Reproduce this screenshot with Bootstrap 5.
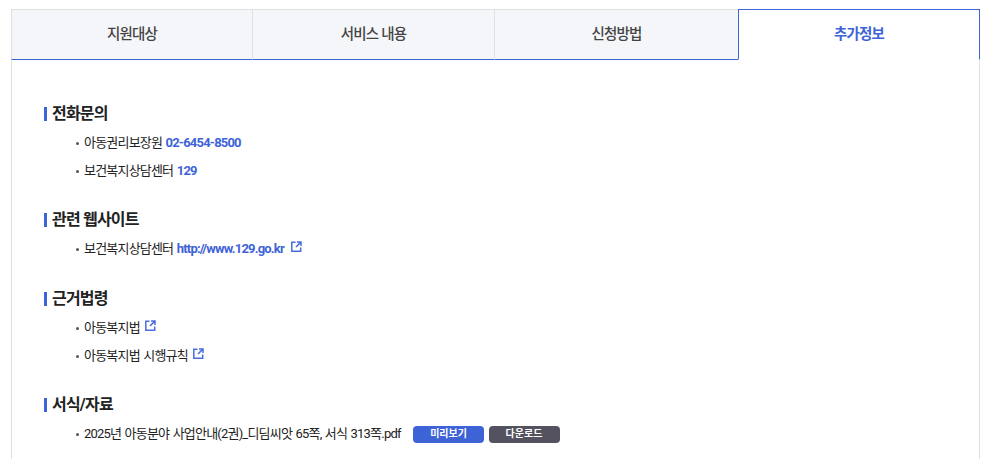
<!DOCTYPE html>
<html lang="ko">
<head>
  <meta charset="UTF-8">
  <title>추가정보</title>
  <link href="https://cdn.jsdelivr.net/npm/bootstrap@5.3.0/dist/css/bootstrap.min.css" rel="stylesheet">
  <style>
    html, body { height: 459px; overflow: hidden; }
    body { font-family: "Roboto", "Noto Sans CJK KR", sans-serif; color: #222; background: #fff; letter-spacing: -0.05em; }
    .detail-wrap { margin: 9px 9px 0 11px; }
    .detail-tabs { height: 51px; flex-wrap: nowrap; }
    .detail-tabs .nav-item:nth-child(1) { width: 242px; }
    .detail-tabs .nav-item:nth-child(2) { width: 242px; }
    .detail-tabs .nav-item:nth-child(3) { width: 244px; }
    .detail-tabs .nav-item:nth-child(4) { width: 241px; }
    .detail-tabs .nav-link {
      display: flex; align-items: center; justify-content: center; height: 51px; padding: 1px 0 0;
      background: #f5f6fa; color: #444; font-size: 14.5px; font-weight: 500; border-radius: 0;
      border: 1px solid #e0e0e0; border-left-width: 0; border-bottom: 1px solid #3e63d6;
    }
    .detail-tabs .nav-item:first-child .nav-link { border-left-width: 1px; }
    .detail-tabs .nav-link.active {
      background: #fff; color: #3e63d6; font-weight: 700;
      border: 1px solid #3e63d6; border-bottom-color: #fff; margin-left: -1px;
    }
    .detail-body { border: 1px solid #e0e0e0; border-top: 0; border-bottom: 0; padding: 42px 32px 0; height: 420px; }
    .info-title { display: flex; align-items: center; font-size: 16px; font-weight: 700; line-height: 24px; margin: 0 0 3px; color: #222; }
    .info-title::before { content: ""; flex: none; width: 3px; height: 14px; background: #3e63d6; margin-right: 5px; }
    .info-list { list-style: none; margin: 0 0 23.4px; padding: 0; }
    .info-list li { position: relative; padding-left: 40px; font-size: 13px; line-height: 28px; word-spacing: 1px; }
    .info-list li::before { content: ""; position: absolute; left: 32px; top: 13px; width: 3px; height: 3px; border-radius: 50%; background: #555; }
    .info-list a { color: #3e63d6; font-weight: 700; text-decoration: none; margin-right: 2px; }
    .ext-icon { width: 11px; height: 11px; margin-left: 2px; vertical-align: 1px; }
    .file-btn { display: inline-block; width: 71px; height: 17px; line-height: 16px; padding: 0; border: 0; border-radius: 4px; font-size: 10px; font-weight: 700; color: #fff; text-align: center; vertical-align: 1px; }
    .file-btn-view { background: #3e63d6; margin-left: 9px; }
    .file-btn-down { background: #54525f; margin-left: 1px; }
  </style>
</head>
<body>
  <div class="detail-wrap">
    <ul class="nav detail-tabs">
      <li class="nav-item"><a class="nav-link" href="#">지원대상</a></li>
      <li class="nav-item"><a class="nav-link" href="#">서비스 내용</a></li>
      <li class="nav-item"><a class="nav-link" href="#">신청방법</a></li>
      <li class="nav-item"><a class="nav-link active" href="#">추가정보</a></li>
    </ul>
    <div class="detail-body">
      <h3 class="info-title">전화문의</h3>
      <ul class="info-list">
        <li>아동권리보장원 <a href="#">02-6454-8500</a></li>
        <li>보건복지상담센터 <a href="#">129</a></li>
      </ul>
      <h3 class="info-title">관련 웹사이트</h3>
      <ul class="info-list">
        <li>보건복지상담센터 <a href="#">http://www.129.go.kr</a>
          <svg class="ext-icon" viewBox="0 0 11 11" fill="none" stroke="#4a6ddb" stroke-width="1.5"><path d="M4.5 1.3H.8v8.9h8.9V6.5"/><path d="M6 1h4v4M9.6 1.4 5 6"/></svg></li>
      </ul>
      <h3 class="info-title">근거법령</h3>
      <ul class="info-list">
        <li>아동복지법
          <svg class="ext-icon" viewBox="0 0 11 11" fill="none" stroke="#4a6ddb" stroke-width="1.5"><path d="M4.5 1.3H.8v8.9h8.9V6.5"/><path d="M6 1h4v4M9.6 1.4 5 6"/></svg></li>
        <li>아동복지법 시행규칙
          <svg class="ext-icon" viewBox="0 0 11 11" fill="none" stroke="#4a6ddb" stroke-width="1.5"><path d="M4.5 1.3H.8v8.9h8.9V6.5"/><path d="M6 1h4v4M9.6 1.4 5 6"/></svg></li>
      </ul>
      <h3 class="info-title">서식/자료</h3>
      <ul class="info-list">
        <li>2025년 아동분야 사업안내(2권)_디딤씨앗 65쪽, 서식 313쪽.pdf
          <button type="button" class="btn file-btn file-btn-view">미리보기</button>
          <button type="button" class="btn file-btn file-btn-down">다운로드</button></li>
      </ul>
    </div>
  </div>
  <script src="https://cdn.jsdelivr.net/npm/bootstrap@5.3.0/dist/js/bootstrap.bundle.min.js"></script>
</body>
</html>
